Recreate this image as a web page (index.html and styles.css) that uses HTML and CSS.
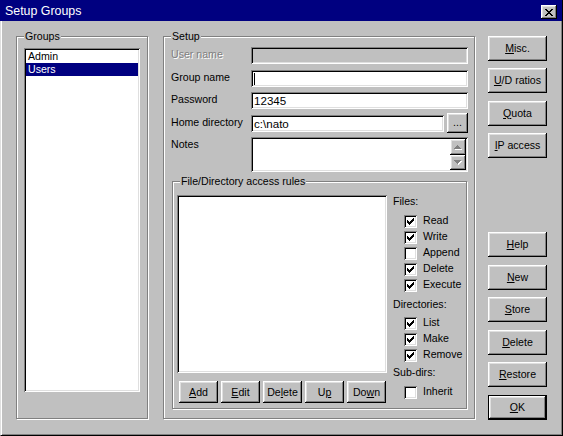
FILE: index.html
```html
<!DOCTYPE html>
<html>
<head>
<meta charset="utf-8">
<title>Setup Groups</title>
<link rel="stylesheet" href="styles.css">
</head>
<body>
<div class="window">
  <div class="titlebar">
    <span class="title">Setup Groups</span>
    <span class="close btn"><svg width="8" height="7" viewBox="0 0 8 7"><path d="M0 0h2v1h-2zM6 0h2v1h-2zM1 1h2v1h-2zM5 1h2v1h-2zM2 2h4v1h-4zM3 3h2v1h-2zM2 4h4v1h-4zM1 5h2v1h-2zM5 5h2v1h-2zM0 6h2v1h-2zM6 6h2v1h-2z" fill="#000"/></svg></span>
  </div>
  <div class="client">
    <div class="group groups">
      <span class="legend">Groups</span>
      <div class="listbox groups-list">
        <div class="item">Admin</div>
        <div class="item selected">Users</div>
      </div>
    </div>

    <div class="group setup">
      <span class="legend">Setup</span>
      <div class="form">
        <span class="lbl disabled">User name</span>
        <div class="field field-disabled"></div>
        <span class="lbl">Group name</span>
        <div class="field"><span class="caret"></span></div>
        <span class="lbl">Password</span>
        <div class="field">12345</div>
        <span class="lbl">Home directory</span>
        <div class="field-row">
          <div class="field grow">c:\nato</div>
          <div class="btn browse">...</div>
        </div>
        <span class="lbl">Notes</span>
        <div class="field notes">
          <div class="scroll">
            <div class="btn sbtn"><svg width="8" height="5" viewBox="0 0 8 5"><path d="M4 1h1v1h-1zM3 2h3v1h-3zM2 3h5v1h-5zM1 4h7v1h-7z" fill="#fff"/><path d="M3 0h1v1h-1zM2 1h3v1h-3zM1 2h5v1h-5zM0 3h7v1h-7z" fill="#808080"/></svg></div>
            <div class="btn sbtn"><svg width="8" height="5" viewBox="0 0 8 5"><path d="M1 1h7v1h-7zM2 2h5v1h-5zM3 3h3v1h-3zM4 4h1v1h-1z" fill="#fff"/><path d="M0 0h7v1h-7zM1 1h5v1h-5zM2 2h3v1h-3zM3 3h1v1h-1z" fill="#808080"/></svg></div>
          </div>
        </div>
      </div>

      <div class="group rules">
        <span class="legend">File/Directory access rules</span>
        <div class="rules-left">
          <div class="listbox rules-list"></div>
          <div class="rule-buttons">
            <div class="btn rbtn"><u>A</u>dd</div>
            <div class="btn rbtn"><u>E</u>dit</div>
            <div class="btn rbtn">De<u>l</u>ete</div>
            <div class="btn rbtn">U<u>p</u></div>
            <div class="btn rbtn">Do<u>w</u>n</div>
          </div>
        </div>
        <div class="perms">
          <div class="heading h-files">Files:</div>
          <div class="chk"><span class="box"><svg width="7" height="7" viewBox="0 0 7 7"><path d="M6 0h1v1h-1zM5 1h2v1h-2zM0 2h1v1h-1zM4 2h3v1h-3zM0 3h2v1h-2zM3 3h3v1h-3zM0 4h5v1h-5zM1 5h3v1h-3zM2 6h1v1h-1z" fill="#000"/></svg></span><span class="ctext">Read</span></div>
          <div class="chk"><span class="box"><svg width="7" height="7" viewBox="0 0 7 7"><path d="M6 0h1v1h-1zM5 1h2v1h-2zM0 2h1v1h-1zM4 2h3v1h-3zM0 3h2v1h-2zM3 3h3v1h-3zM0 4h5v1h-5zM1 5h3v1h-3zM2 6h1v1h-1z" fill="#000"/></svg></span><span class="ctext">Write</span></div>
          <div class="chk"><span class="box"></span><span class="ctext">Append</span></div>
          <div class="chk"><span class="box"><svg width="7" height="7" viewBox="0 0 7 7"><path d="M6 0h1v1h-1zM5 1h2v1h-2zM0 2h1v1h-1zM4 2h3v1h-3zM0 3h2v1h-2zM3 3h3v1h-3zM0 4h5v1h-5zM1 5h3v1h-3zM2 6h1v1h-1z" fill="#000"/></svg></span><span class="ctext">Delete</span></div>
          <div class="chk"><span class="box"><svg width="7" height="7" viewBox="0 0 7 7"><path d="M6 0h1v1h-1zM5 1h2v1h-2zM0 2h1v1h-1zM4 2h3v1h-3zM0 3h2v1h-2zM3 3h3v1h-3zM0 4h5v1h-5zM1 5h3v1h-3zM2 6h1v1h-1z" fill="#000"/></svg></span><span class="ctext">Execute</span></div>
          <div class="heading h-dirs">Directories:</div>
          <div class="chk"><span class="box"><svg width="7" height="7" viewBox="0 0 7 7"><path d="M6 0h1v1h-1zM5 1h2v1h-2zM0 2h1v1h-1zM4 2h3v1h-3zM0 3h2v1h-2zM3 3h3v1h-3zM0 4h5v1h-5zM1 5h3v1h-3zM2 6h1v1h-1z" fill="#000"/></svg></span><span class="ctext">List</span></div>
          <div class="chk"><span class="box"><svg width="7" height="7" viewBox="0 0 7 7"><path d="M6 0h1v1h-1zM5 1h2v1h-2zM0 2h1v1h-1zM4 2h3v1h-3zM0 3h2v1h-2zM3 3h3v1h-3zM0 4h5v1h-5zM1 5h3v1h-3zM2 6h1v1h-1z" fill="#000"/></svg></span><span class="ctext">Make</span></div>
          <div class="chk"><span class="box"><svg width="7" height="7" viewBox="0 0 7 7"><path d="M6 0h1v1h-1zM5 1h2v1h-2zM0 2h1v1h-1zM4 2h3v1h-3zM0 3h2v1h-2zM3 3h3v1h-3zM0 4h5v1h-5zM1 5h3v1h-3zM2 6h1v1h-1z" fill="#000"/></svg></span><span class="ctext">Remove</span></div>
          <div class="heading h-sub">Sub-dirs:</div>
          <div class="chk"><span class="box"></span><span class="ctext">Inherit</span></div>
        </div>
      </div>
    </div>

    <div class="side">
      <div class="side-group">
        <div class="btn sbig"><u>M</u>isc.</div>
        <div class="btn sbig"><u>U</u>/D ratios</div>
        <div class="btn sbig"><u>Q</u>uota</div>
        <div class="btn sbig"><u>I</u>P access</div>
      </div>
      <div class="side-group bottom">
        <div class="btn sbig"><u>H</u>elp</div>
        <div class="btn sbig"><u>N</u>ew</div>
        <div class="btn sbig"><u>S</u>tore</div>
        <div class="btn sbig"><u>D</u>elete</div>
        <div class="btn sbig"><u>R</u>estore</div>
        <div class="btn sbig default"><u>O</u>K</div>
      </div>
    </div>
  </div>
</div>
</body>
</html>
```

FILE: styles.css
```css
* { box-sizing: border-box; }

body {
  margin: 0;
  background: #c0c0c0;
  font-family: "Liberation Sans", Arial, sans-serif;
  font-size: 10.6px;
  color: #000;
}

u { text-decoration: underline; text-underline-offset: 1px; }

.window {
  width: 563px;
  height: 436px;
  display: flex;
  flex-direction: column;
  background: #c0c0c0;
  border-right: 1px solid #000;
}

.titlebar {
  height: 21px;
  flex: none;
  background: #000080;
  color: #fff;
  display: flex;
  align-items: flex-start;
  justify-content: space-between;
  padding: 0 5px 0 5px;
}

.title {
  font-size: 12.4px;
  line-height: 21px;
  padding-top: 1px;
}

.close {
  margin-top: 5px;
  width: 16px;
  height: 14px;
}

.client {
  flex: 1;
  display: flex;
  padding: 15px 0 0 15px;
  border-left: 1px solid #dfdfdf;
  border-bottom: 1px solid #000;
  box-shadow: inset 1px 0 #fff, inset -1px -1px #808080;
}

/* Etched group box */
.group {
  position: relative;
  border: 1px solid #808080;
  box-shadow: inset 1px 1px #fff, 1px 1px #fff;
}

.legend {
  position: absolute;
  top: -7px;
  left: 7px;
  padding: 0 1px;
  line-height: 13px;
  background: #c0c0c0;
  white-space: nowrap;
}

/* Buttons */
.btn {
  background: #c0c0c0;
  box-shadow: inset -1px -1px #000, inset 1px 1px #fff, inset -2px -2px #808080, inset 2px 2px #dfdfdf;
  display: flex;
  align-items: center;
  justify-content: center;
  line-height: 13px;
  white-space: nowrap;
}

/* Sunken fields */
.listbox, .field, .box {
  background: #fff;
  box-shadow: inset 1px 1px #808080, inset -1px -1px #fff, inset 2px 2px #000, inset -2px -2px #dfdfdf;
}

/* Groups */
.groups {
  width: 132px;
  height: 383px;
  flex: none;
  padding: 11px 0 0 7px;
}

.groups-list {
  width: 116px;
  height: 344px;
  padding: 2px;
}

.item {
  height: 13px;
  line-height: 13px;
  padding-left: 2px;
}

.item.selected {
  background: #000080;
  color: #fff;
}

/* Setup */
.setup {
  width: 312px;
  height: 383px;
  flex: none;
  margin-left: 15px;
  padding: 10px 6px 0 7px;
}

.form {
  display: grid;
  grid-template-columns: 80px 1fr;
  grid-template-rows: 17px 17px 17px 17px 35px;
  row-gap: 5.6px;
}

.lbl {
  line-height: 13px;
  padding-top: 1px;
  white-space: nowrap;
}

.lbl.disabled {
  color: #808080;
  text-shadow: 1px 1px 0 #fff;
}

.field {
  height: 17px;
  padding: 2px 3px;
  font-size: 11.6px;
  line-height: 13px;
  white-space: nowrap;
}

.field-disabled {
  background: #c0c0c0;
}

.caret {
  display: block;
  width: 1px;
  height: 12px;
  margin-top: 1px;
  background: #000;
}

.field-row {
  display: flex;
  align-items: center;
  gap: 3px;
}

.grow { flex: 1; }

.browse {
  width: 21px;
  height: 20px;
  flex: none;
  align-items: flex-end;
  padding-bottom: 4px;
}

.notes {
  height: 35px;
  padding: 2px;
  display: flex;
  justify-content: flex-end;
}

.scroll {
  width: 16px;
  display: flex;
  flex-direction: column;
}

.sbtn {
  flex: 1;
}

/* Rules */
.rules {
  width: 295px;
  height: 228px;
  margin-top: 9px;
  margin-left: 1px;
  display: flex;
  padding: 13px 0 4px 4px;
}

.rules-left {
  display: flex;
  flex-direction: column;
}

.rules-list {
  width: 210px;
  height: 178px;
}

.rule-buttons {
  display: flex;
  gap: 3px;
  margin-top: 8px;
  padding-left: 2px;
}

.rbtn {
  width: 39px;
  height: 22px;
}

.perms {
  margin-left: 6px;
  display: flex;
  flex-direction: column;
}

.heading {
  line-height: 13px;
  white-space: nowrap;
}

.h-files { margin-bottom: 7px; }
.h-dirs { margin-top: 3px; margin-bottom: 6px; }
.h-sub { margin-top: 1px; margin-bottom: 7px; }

.chk {
  height: 16px;
  display: flex;
  align-items: flex-start;
  padding-left: 11px;
}

.box {
  width: 13px;
  height: 13px;
  flex: none;
  padding: 3px;
  display: flex;
}

.ctext {
  margin-left: 6px;
  line-height: 13px;
  margin-top: -1px;
  white-space: nowrap;
}

/* Side buttons */
.side {
  width: 59px;
  flex: none;
  margin-left: 13px;
  margin-top: -0.5px;
  display: flex;
  flex-direction: column;
}

.side-group {
  display: flex;
  flex-direction: column;
  gap: 7.5px;
}

.side-group.bottom {
  margin-top: 74px;
}

.sbig {
  height: 25px;
}

.default {
  border: 1px solid #000;
}
```
